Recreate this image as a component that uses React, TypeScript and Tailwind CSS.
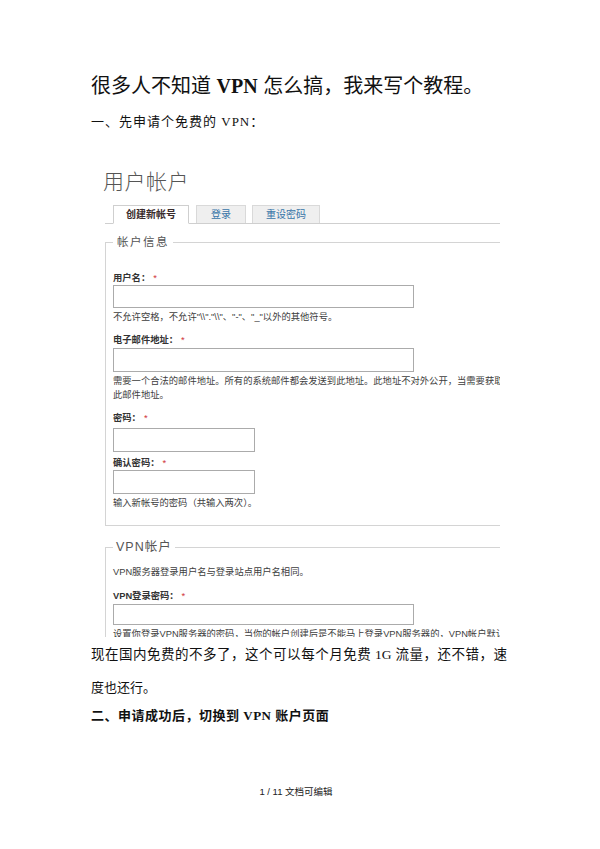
import React from "react";

const ui = "font-['Liberation_Sans','Noto_Sans_CJK_SC',sans-serif]";

function Label({ text }: { text: string }) {
  return (
    <div className="h-[14px] text-[9.3px] leading-[14px] font-bold text-[#333] whitespace-nowrap">
      {text}
      <span className="ml-[3px] font-normal text-[#d0353a]">*</span>
    </div>
  );
}

function Field({ w, h, mt }: { w: string; h: string; mt: string }) {
  return (
    <input
      type="text"
      readOnly
      className={`block ${w} ${h} ${mt} border border-[#ababab] bg-white`}
    />
  );
}

function Help({ children, mt = "mt-[2px]" }: { children: React.ReactNode; mt?: string }) {
  return (
    <div className={`${mt} text-[9.3px] leading-[14px] text-[#3d3d3d] whitespace-nowrap`}>
      {children}
    </div>
  );
}

export default function App() {
  return (
    <div className="min-h-[849px] bg-white pt-[72px] pl-[91px] text-[#111] font-['Liberation_Serif','Noto_Sans_CJK_SC',serif]">
      <h1 className="h-[28px] text-[20px] leading-[28px] font-normal whitespace-nowrap font-['Liberation_Sans','Noto_Sans_CJK_SC',sans-serif]">
        很多人不知道 <span className="font-bold font-['Liberation_Serif',serif]">VPN</span> 怎么搞，我来写个教程。
      </h1>
      <p className="mt-[12px] h-[20px] text-[13px] leading-[20px] tracking-[1px] whitespace-nowrap">
        一、先申请个免费的 VPN：
      </p>

      {/* embedded screenshot */}
      <div className={`mt-[28px] ml-[5px] w-[404px] h-[477px] overflow-hidden ${ui}`}>
        <div className="w-[480px] pl-[7px] pt-[10px]">
          <div className="h-[24px] text-[21px] leading-[24px] font-light text-[#555] tracking-[0.5px]">
            用户帐户
          </div>

          <div className="mt-[11px] ml-[2px] flex items-end pl-[8px] border-b border-[#cfcfcf]">
            <div className="-mb-px h-[19px] w-[76px] border border-b-white border-[#cfcfcf] bg-white text-center text-[10px] leading-[17px] font-bold text-[#3a2c2c]">
              创建新帐号
            </div>
            <div className="ml-[7px] h-[18px] w-[50px] border border-b-0 border-[#d9d9d9] bg-[#efefef] text-center text-[10px] leading-[17px] text-[#3775a8]">
              登录
            </div>
            <div className="ml-[6px] h-[18px] w-[68px] border border-b-0 border-[#d9d9d9] bg-[#efefef] text-center text-[10px] leading-[17px] text-[#3775a8]">
              重设密码
            </div>
          </div>

          <fieldset className="mt-[10px] ml-[2px] w-[420px] border border-[#d4d4d4] pl-[7px] pt-[21px] pb-[15px]">
            <legend className="px-[4px] h-[16px] text-[11.5px] leading-[16px] tracking-[1.5px] text-[#555]">
              帐户信息
            </legend>
            <Label text="用户名：" />
            <Field w="w-[301px]" h="h-[23px]" mt="mt-0" />
            <Help>不允许空格，不允许"\\"."\\"、"-"、"_"以外的其他符号。</Help>

            <div className="mt-[9px]">
              <Label text="电子邮件地址：" />
            </div>
            <Field w="w-[301px]" h="h-[24px]" mt="mt-[1px]" />
            <Help>
              需要一个合法的邮件地址。所有的系统邮件都会发送到此地址。此地址不对外公开，当需要获取新密码或接收通知时才会使用
              <br />
              此邮件地址。
            </Help>

            <div className="mt-[9px]">
              <Label text="密码：" />
            </div>
            <Field w="w-[142px]" h="h-[24px]" mt="mt-[3px]" />

            <div className="mt-[4px]">
              <Label text="确认密码：" />
            </div>
            <Field w="w-[142px]" h="h-[24px]" mt="mt-0" />
            <Help>输入新帐号的密码（共输入两次）。</Help>
          </fieldset>

          <fieldset className="mt-[12px] ml-[2px] w-[420px] border border-[#d4d4d4] pl-[7px] pt-[9px] pb-[15px]">
            <legend className="px-[3px] h-[18px] text-[12.5px] leading-[18px] tracking-[1px] text-[#555]">
              VPN帐户
            </legend>
            <Help mt="mt-0">VPN服务器登录用户名与登录站点用户名相同。</Help>
            <div className="mt-[10px]">
              <Label text="VPN登录密码：" />
            </div>
            <Field w="w-[301px]" h="h-[21px]" mt="mt-[1px]" />
            <Help>
              设置你登录VPN服务器的密码，当你的帐户创建后是不能马上登录VPN服务器的，VPN帐户默认是关闭的。
            </Help>
          </fieldset>
        </div>
      </div>

      <div className="mt-[8px] w-[416px] h-[20px] text-[13.5px] leading-[20px] text-justify [text-align-last:justify]">
        现在国内免费的不多了，这个可以每个月免费 1G 流量，还不错，速
      </div>
      <div className="mt-[15px] h-[16px] text-[13px] leading-[16px] whitespace-nowrap">
        度也还行。
      </div>
      <div className="mt-[11px] h-[18px] text-[13px] leading-[18px] font-bold tracking-[0.5px] whitespace-nowrap">
        二、申请成功后，切换到 VPN 账户页面
      </div>

      <div className={`mt-[61px] -ml-[91px] w-[600px] pr-[8px] text-center text-[9.5px] leading-[12px] text-[#222] ${ui}`}>
        1 / 11 文档可编辑
      </div>
    </div>
  );
}
